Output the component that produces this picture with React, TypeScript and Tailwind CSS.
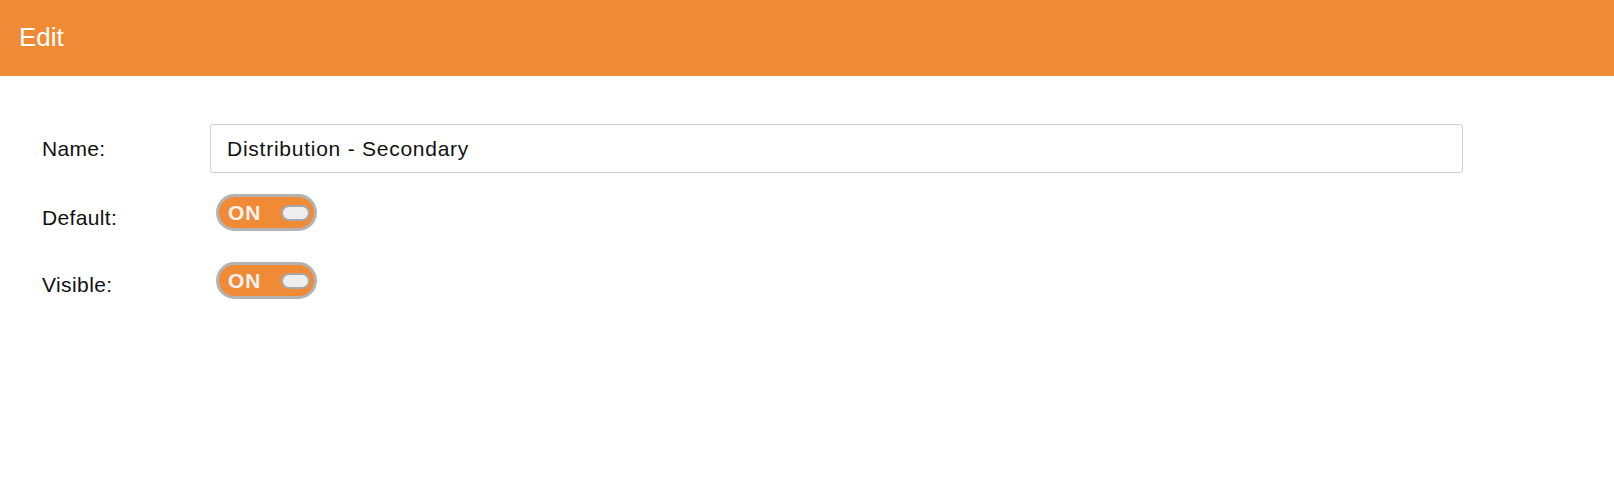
import React from "react";

function Toggle() {
  return (
    <div className="ml-[6px] flex h-[37px] w-[101px] items-center justify-between rounded-full border-[3px] border-[#b3b3b3] bg-[#f08a35] pl-[9px] pr-[4px]">
      <span className="text-[21px] font-bold leading-none tracking-[1px] text-[#f2f2f2]">ON</span>
      <span className="h-[16px] w-[29px] rounded-full border-2 border-[#a8a8a8] bg-[#eeeeee]" />
    </div>
  );
}

export default function App() {
  return (
    <div className="min-h-[502px] w-full bg-white font-['Liberation_Sans',Arial,sans-serif] text-[#111]">
      <div className="flex h-[76px] items-center bg-[#f08a35] pb-[2px] pl-[19px]">
        <span className="text-[26px] text-white">Edit</span>
      </div>
      <div className="flex flex-col pl-[42px] pt-[48px]">
        <div className="flex h-[49px] items-center">
          <div className="w-[168px] text-[21px] tracking-[0.3px]">Name:</div>
          <div className="flex h-[49px] w-[1253px] items-center rounded-[3px] border border-[#cfcfcf] pl-[16px] text-[21px] tracking-[0.75px]">
            Distribution - Secondary
          </div>
        </div>
        <div className="mt-[21px] flex h-[37px] items-center">
          <div className="w-[168px] pt-[10px] text-[21px] tracking-[0.35px]">Default:</div>
          <Toggle />
        </div>
        <div className="mt-[31px] flex h-[37px] items-center">
          <div className="w-[168px] pt-[8px] text-[21px] tracking-[0.4px]">Visible:</div>
          <Toggle />
        </div>
      </div>
    </div>
  );
}
